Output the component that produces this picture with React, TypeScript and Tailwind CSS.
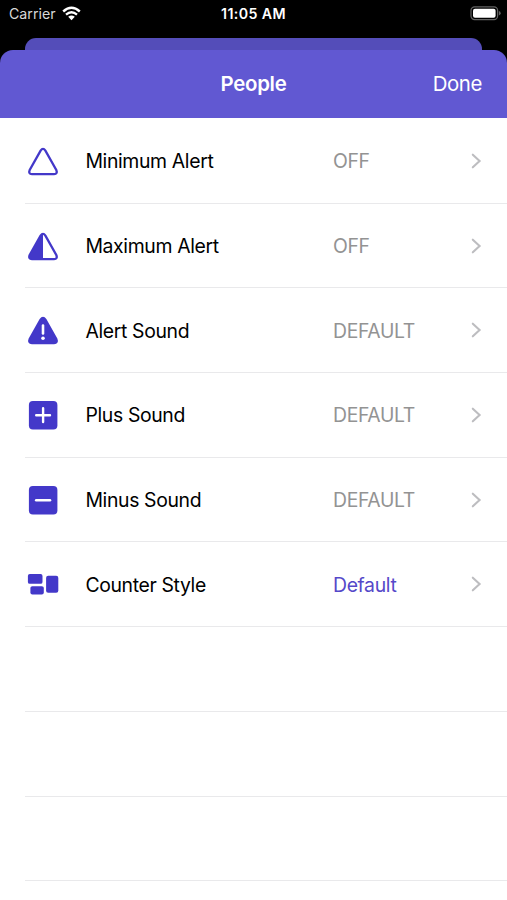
import type { ReactNode } from 'react';
import clsx from 'clsx';

interface Setting {
  label: string;
  value: string;
  icon: ReactNode;
  active?: boolean;
}

const TRIANGLE =
  'M13.6 5.6 Q16 2.2 18.4 5.6 L29.3 25 Q30.9 29 27 29.2 H5 Q1.1 29 2.7 25 Z';

const settings: Setting[] = [
  {
    label: 'Minimum Alert',
    value: 'OFF',
    icon: <path d={TRIANGLE} fill="none" stroke="currentColor" strokeWidth="2.3" />,
  },
  {
    label: 'Maximum Alert',
    value: 'OFF',
    icon: (
      <>
        <path d={TRIANGLE} fill="none" stroke="currentColor" strokeWidth="2.3" />
        <path d="M16 3.8 Q14.6 4 13.6 5.6 L2.7 25 Q1.1 29 5 29.2 H16 Z" />
      </>
    ),
  },
  {
    label: 'Alert Sound',
    value: 'DEFAULT',
    icon: (
      <>
        <path d={TRIANGLE} stroke="currentColor" strokeWidth="2.3" />
        <path d="M16 11.6 V19.4" stroke="white" strokeWidth="2.6" strokeLinecap="round" />
        <circle cx="16" cy="24.2" r="1.8" fill="white" />
      </>
    ),
  },
  {
    label: 'Plus Sound',
    value: 'DEFAULT',
    icon: (
      <>
        <rect x="1.9" y="2" width="28.5" height="28.5" rx="4" />
        <path d="M9.2 16.2 H23 M16.1 9.3 V23.1" stroke="white" strokeWidth="2.4" strokeLinecap="round" />
      </>
    ),
  },
  {
    label: 'Minus Sound',
    value: 'DEFAULT',
    icon: (
      <>
        <rect x="1.9" y="2" width="28.5" height="28.5" rx="4" />
        <path d="M9.2 16.2 H23" stroke="white" strokeWidth="2.6" strokeLinecap="round" />
      </>
    ),
  },
  {
    label: 'Counter Style',
    value: 'Default',
    active: true,
    icon: (
      <>
        <rect x="0.9" y="6" width="14.6" height="9.8" rx="1.9" />
        <rect x="3.4" y="18.2" width="13.4" height="8.2" rx="1.9" />
        <rect x="19.1" y="7.8" width="12.2" height="17" rx="2.1" />
      </>
    ),
  },
];

function StatusBar() {
  return (
    <div className="flex h-[38px] items-start justify-between pt-[5px] text-white">
      <div className="flex w-[169px] items-center pl-[9px]">
        <span className="text-[14.2px] leading-[18px] text-[#d8d8d8]">Carrier</span>
        <svg className="-mt-[2px] ml-[6px] h-[15px] w-[19px]" viewBox="0 0 19 15" fill="none" stroke="white">
          <path d="M1.2 5.5 Q9.5 -2.1 17.8 5.5" strokeWidth="2.4" />
          <path d="M4 8.7 Q9.5 3.8 15 8.7" strokeWidth="2.3" />
          <path d="M6.2 10.8 Q9.5 8.1 12.8 10.8 L9.5 14.2 Z" fill="white" stroke="none" />
        </svg>
      </div>
      <span className="text-[14.2px] leading-[18px] font-semibold tracking-[0.4px]">11:05 AM</span>
      <div className="flex w-[169px] justify-end pr-[6px]">
        <svg className="mt-px h-[15px] w-[31px]" viewBox="0 0 31 15">
          <rect x="1" y="0.8" width="26.6" height="12.8" rx="3.6" fill="none" stroke="#626262" strokeWidth="1.2" />
          <rect x="3" y="2.7" width="22.6" height="9" rx="2" fill="white" />
          <path d="M28.9 5 Q30.7 5.6 30.7 7.2 Q30.7 8.8 28.9 9.4 Z" fill="#626262" />
        </svg>
      </div>
    </div>
  );
}

function SettingRow({ label, value, icon, active }: Setting) {
  return (
    <div className="flex h-[84.7px] items-center border-b border-[#e9e9eb] text-[19.4px] tracking-[-0.35px]">
      <svg className="ml-[2px] h-8 w-8 shrink-0 text-[#4338c9]" viewBox="0 0 32 32" fill="currentColor">
        {icon}
      </svg>
      <span className="ml-[26.4px] w-[247.6px] pt-[2px] text-black">{label}</span>
      <span className={clsx('flex-1 pt-[2px]', active ? 'text-[#5548c9]' : 'text-[#939393]')}>{value}</span>
      <svg className="mr-[25px] h-4 w-[11px]" viewBox="0 0 11 16" fill="none" stroke="#bdbdc0" strokeWidth="2.1">
        <path d="M1.8 1.7 L8.6 8 L1.8 14.3" strokeLinecap="round" />
      </svg>
    </div>
  );
}

export default function App() {
  return (
    <div className="h-[900px] w-[507px] overflow-hidden bg-black font-[Inter,'Liberation_Sans',sans-serif]">
      <StatusBar />
      <div className="mx-[25px] h-3 rounded-t-[11px] bg-[#544db9]" />
      <header className="grid h-[68px] grid-cols-3 items-center rounded-t-[13px] bg-[#6158d2] pt-px text-[20.4px] text-white">
        <span />
        <h1 className="text-center font-semibold tracking-[-0.3px]">People</h1>
        <button className="pr-[25px] text-right tracking-[-0.4px]">Done</button>
      </header>
      <main className="h-[782px] bg-white pt-px pl-[25px]">
        {settings.map((setting) => (
          <SettingRow key={setting.label} {...setting} />
        ))}
        {[0, 1, 2].map((row) => (
          <div key={row} className="h-[84.7px] border-b border-[#e9e9eb]" />
        ))}
      </main>
    </div>
  );
}
